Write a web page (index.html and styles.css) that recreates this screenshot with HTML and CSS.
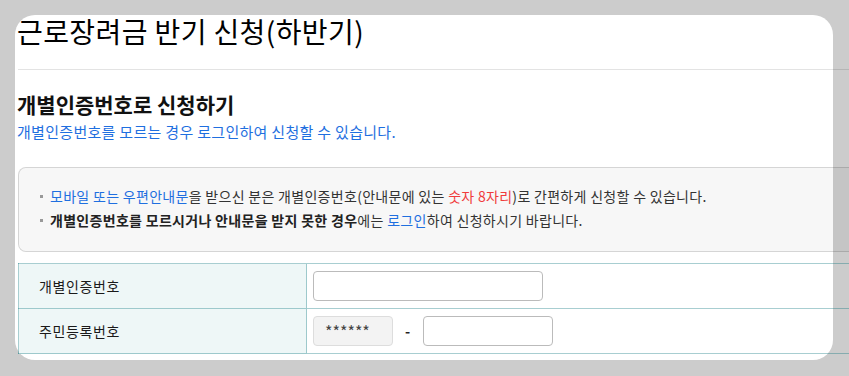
FILE: index.html
```html
<!DOCTYPE html>
<html>
<head>
  <meta charset="utf-8">
  <title>근로장려금 반기 신청</title>
  <link rel="stylesheet" href="styles.css">
</head>
<body>
  <div class="page">
    <div class="content">
      <h1 class="page-title">근로장려금 반기 신청(하반기)</h1>
      <hr class="divider">

      <h2 class="section-title">개별인증번호로 신청하기</h2>
      <p class="section-desc">개별인증번호를 모르는 경우 로그인하여 신청할 수 있습니다.</p>

      <div class="notice">
        <ul>
          <li><span class="blue">모바일 또는 우편안내문</span>을 받으신 분은 개별인증번호(안내문에 있는 <span class="red">숫자 8자리</span>)로 간편하게 신청할 수 있습니다.</li>
          <li><b>개별인증번호를 모르시거나 안내문을 받지 못한 경우</b>에는 <span class="blue">로그인</span>하여 신청하시기 바랍니다.</li>
        </ul>
      </div>

      <table class="form-table">
        <tr>
          <th>개별인증번호</th>
          <td><input type="text" class="input-code"></td>
        </tr>
        <tr>
          <th>주민등록번호</th>
          <td>
            <div class="ssn">
              <input type="text" class="input-front" value="******" readonly>
              <span class="dash">-</span>
              <input type="password" class="input-back">
            </div>
          </td>
        </tr>
      </table>
    </div>
  </div>
</body>
</html>
```

FILE: styles.css
```css
html {
  overflow: hidden;
}

body {
  margin: 0;
  padding: 15px;
  background: #cccccc;
  font-family: "Noto Sans CJK KR", "Noto Sans", sans-serif;
  color: #222;
}

.page {
  width: 818px;
  background: #fff;
  border-radius: 20px;
  padding-bottom: 6px;
}

.content {
  width: 900px;
  padding-left: 2px;
}

.page-title {
  margin: 0;
  font-size: 28px;
  line-height: 32px;
  font-weight: normal;
  letter-spacing: 0.4px;
  color: #000;
}

.divider {
  margin: 22px 0 0 1px;
  border: 0;
  border-top: 1px solid rgba(0, 0, 0, 0.11);
}

.section-title {
  margin: 20px 0 0;
  font-size: 21px;
  line-height: 28px;
  font-weight: bold;
  color: #111;
}

.section-desc {
  margin: 4px 0 0;
  font-size: 15px;
  line-height: 20px;
  letter-spacing: 0.3px;
  color: #1f6fe0;
}

.notice {
  margin: 25px 0 0 1px;
  padding: 16px 20px 19px 21px;
  border: 1px solid rgba(0, 0, 0, 0.14);
  border-radius: 8px;
  background: rgba(0, 0, 0, 0.03);
}

.notice ul {
  margin: 0;
  padding: 0;
  list-style: none;
}

.notice li {
  position: relative;
  padding-left: 10px;
  font-size: 14px;
  line-height: 24px;
  letter-spacing: 0.3px;
  color: #333;
}

.notice li::before {
  content: "";
  position: absolute;
  left: 0;
  top: 11px;
  width: 3px;
  height: 3px;
  background: #999;
}

.notice b {
  color: #222;
}

.blue {
  color: #1f6fe0;
}

.red {
  color: #f03c3c;
}

.form-table {
  margin: 11px 0 0 1px;
  width: 100%;
  border-collapse: collapse;
  font-size: 14px;
  letter-spacing: 0.6px;
}

.form-table th,
.form-table td {
  height: 44px;
  padding: 0;
  border: 1px solid rgba(0, 110, 120, 0.34);
  border-right: 0;
}

.form-table th {
  width: 267px;
  padding-left: 20px;
  text-align: left;
  font-weight: normal;
  background: #eef7f7;
  color: #1a1a1a;
}

.form-table td {
  padding-left: 6px;
}

.form-table input {
  box-sizing: border-box;
  height: 30px;
  border: 1px solid #bbb;
  border-radius: 4px;
  padding: 0 11px;
  font-family: inherit;
  font-size: 13px;
  display: block;
}

.input-code {
  width: 230px;
}

.ssn {
  display: flex;
  align-items: center;
}

.form-table .input-front {
  width: 80px;
  background: #f3f3f3;
  border-color: #ddd;
  color: #444;
  font-size: 16px;
  letter-spacing: 0;
}

.dash {
  width: 30px;
  text-align: center;
  font-weight: bold;
  color: #222;
}

.input-back {
  width: 130px;
}
```
